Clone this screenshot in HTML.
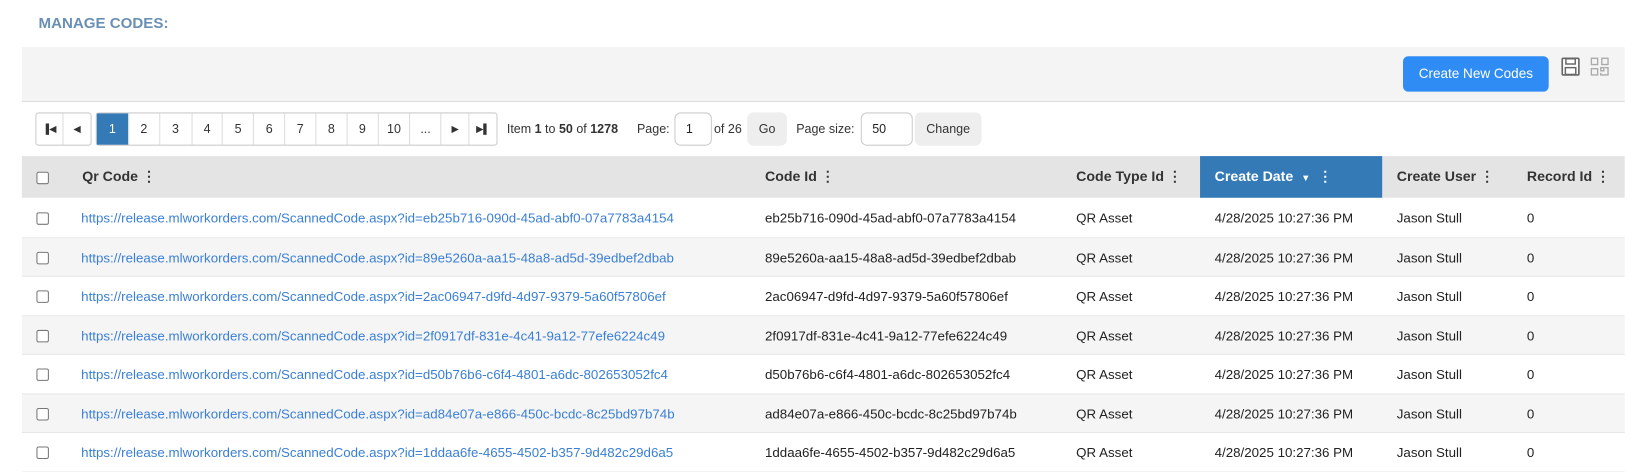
<!DOCTYPE html>
<html><head><meta charset="utf-8"><style>
*{box-sizing:border-box;margin:0;padding:0}
body{width:1632px;height:467px;background:#fff;font-family:"Liberation Sans",Arial,sans-serif;font-size:12px;color:#222;position:relative;overflow:hidden}
#w{position:absolute;left:0;top:0;width:1568px;height:449px;transform:scale(1.0408);transform-origin:0 0}
.abs{position:absolute}
h1{position:absolute;left:37px;top:15px;font-size:14.5px;font-weight:bold;color:#6a8fb5}
.tool{left:21px;top:45px;width:1540px;height:53px;background:#f4f4f4;border-bottom:1px solid #ddd}
.btn{left:1348px;top:54px;width:140px;height:34px;background:#2e8cf4;color:#fff;border-radius:5px;font-size:13px;text-align:center;line-height:34px}
.pg{top:108px;height:32px;border:1px solid #ccc;border-radius:3px;display:flex;background:#fff}
.pg div{border-right:1px solid #ddd;text-align:center;line-height:30px;font-size:12px;color:#333}
.pg div:last-child{border-right:none}
.pg .on{background:#337ab7;color:#fff}
.t{top:108px;line-height:32px;font-size:12px;color:#333}
.inp{top:108px;height:32px;border:1px solid #ccc;border-radius:6px;background:#fff;line-height:30px;padding-left:10px}
.gb{top:108px;height:32px;background:#eee;border-radius:6px;line-height:32px;text-align:center;color:#333}
.hd{left:21px;top:150px;width:1540px;height:40px;background:#e4e4e4}
.hc{top:150px;line-height:40px;font-weight:bold;font-size:13.6px;color:#333}
.cb{width:12px;height:12px;border:1px solid #777;border-radius:2px;background:#fff}
.row{left:21px;width:1540px;border-bottom:1px solid #e6e6e6}
.c{line-height:37px;font-size:12.8px}
a{color:#3a7fd5;text-decoration:none}
</style></head><body><div id="w">
<h1>MANAGE CODES:</h1>
<div class="abs tool"></div>
<div class="abs btn">Create New Codes</div>
<svg class="abs" style="left:1500px;top:55px" width="18" height="18" viewBox="0 0 18 18"><rect x="1" y="1" width="16" height="16" rx="1" fill="#fff" stroke="#666" stroke-width="1.6"/><rect x="4.5" y="1.5" width="9" height="5" fill="none" stroke="#666" stroke-width="1.4"/><rect x="4" y="10" width="10" height="6.5" fill="none" stroke="#666" stroke-width="1.4"/></svg>
<svg class="abs" style="left:1528px;top:55px" width="18" height="18" viewBox="0 0 18 18" fill="none" stroke="#aaa" stroke-width="1.3"><rect x="1" y="1" width="6" height="6"/><rect x="11" y="1" width="6" height="6"/><rect x="1" y="11" width="6" height="6"/><rect x="10" y="10" width="3" height="3"/><path d="M14 10h3v7h-7v-2"/></svg>

<div class="abs pg" style="left:34px;width:54px"><div style="width:26px;font-size:9px">▐◀</div><div style="width:26px;font-size:9px">◀</div></div>
<div class="abs pg" style="left:92px;width:386px">
<div class="on" style="width:31px">1</div><div style="width:30px">2</div><div style="width:31px">3</div><div style="width:30px">4</div><div style="width:30px">5</div><div style="width:30px">6</div><div style="width:30px">7</div><div style="width:30px">8</div><div style="width:30px">9</div><div style="width:31px">10</div><div style="width:30px">...</div><div style="width:27px;font-size:9px">▶</div><div style="width:26px;font-size:9px">▶▌</div></div>
<div class="abs t" style="left:487px">Item <b>1</b> to <b>50</b> of <b>1278</b></div>
<div class="abs t" style="left:612px">Page:</div>
<div class="abs inp" style="left:648px;width:36px">1</div>
<div class="abs t" style="left:686px">of 26</div>
<div class="abs gb" style="left:718px;width:38px">Go</div>
<div class="abs t" style="left:765px">Page size:</div>
<div class="abs inp" style="left:827px;width:50px">50</div>
<div class="abs gb" style="left:879px;width:64px">Change</div>

<div class="abs hd"></div>
<div class="abs" style="left:1153px;top:150px;width:175px;height:40px;background:#337ab7"></div>
<div class="abs cb" style="left:35px;top:165px"></div>
<div class="abs hc" style="left:79px">Qr Code ⋮</div>
<div class="abs hc" style="left:735px">Code Id ⋮</div>
<div class="abs hc" style="left:1034px">Code Type Id ⋮</div>
<div class="abs hc" style="left:1167px;color:#fff">Create Date &nbsp;<span style="font-size:9px">▼</span>&nbsp; ⋮</div>
<div class="abs hc" style="left:1342px">Create User ⋮</div>
<div class="abs hc" style="left:1467px">Record Id ⋮</div>

<div id="rows"></div>
</div>
<script>
var ids=["eb25b716-090d-45ad-abf0-07a7783a4154","89e5260a-aa15-48a8-ad5d-39edbef2dbab","2ac06947-d9fd-4d97-9379-5a60f57806ef","2f0917df-831e-4c41-9a12-77efe6224c49","d50b76b6-c6f4-4801-a6dc-802653052fc4","ad84e07a-e866-450c-bcdc-8c25bd97b74b","1ddaa6fe-4655-4502-b357-9d482c29d6a5"];
var h="";
ids.forEach(function(id,i){var y=191+i*37.5;
h+='<div class="abs row" style="top:'+y+'px;height:37.5px;background:'+(i%2?'#f5f5f5':'#fff')+'"></div>'+
'<div class="abs cb" style="left:35px;top:'+(y+13)+'px"></div>'+
'<div class="abs c" style="left:78px;top:'+y+'px"><a>https://release.mlworkorders.com/ScannedCode.aspx?id='+id+'</a></div>'+
'<div class="abs c" style="left:735px;top:'+y+'px">'+id+'</div>'+
'<div class="abs c" style="left:1034px;top:'+y+'px">QR Asset</div>'+
'<div class="abs c" style="left:1167px;top:'+y+'px">4/28/2025 10:27:36 PM</div>'+
'<div class="abs c" style="left:1342px;top:'+y+'px">Jason Stull</div>'+
'<div class="abs c" style="left:1467px;top:'+y+'px">0</div>';});
document.getElementById("rows").innerHTML=h;
</script>
</body></html>
